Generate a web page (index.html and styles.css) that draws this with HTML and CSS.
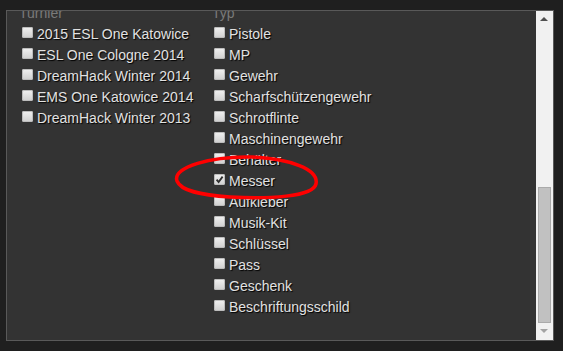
FILE: index.html
```html
<!DOCTYPE html>
<html lang="de">
<head>
    <meta charset="UTF-8">
    <meta name="viewport" content="width=device-width, initial-scale=1.0">
    <title>Filter</title>
    <link rel="stylesheet" href="styles.css">
</head>
<body>

    <div class="panel">
        <div class="filters">
            <div class="group">
                <div class="legend">Turnier</div>
                <label class="option"><span class="box"></span>2015 ESL One Katowice</label>
                <label class="option"><span class="box"></span>ESL One Cologne 2014</label>
                <label class="option"><span class="box"></span>DreamHack Winter 2014</label>
                <label class="option"><span class="box"></span>EMS One Katowice 2014</label>
                <label class="option"><span class="box"></span>DreamHack Winter 2013</label>
            </div>
            <div class="group">
                <div class="legend">Typ</div>
                <label class="option"><span class="box"></span>Pistole</label>
                <label class="option"><span class="box"></span>MP</label>
                <label class="option"><span class="box"></span>Gewehr</label>
                <label class="option"><span class="box"></span>Scharfschützengewehr</label>
                <label class="option"><span class="box"></span>Schrotflinte</label>
                <label class="option"><span class="box"></span>Maschinengewehr</label>
                <label class="option"><span class="box"></span>Behälter</label>
                <label class="option"><span class="box checked"><svg width="11" height="11" viewBox="0 0 11 11"><path d="M2.6 5.6 L4.6 8 L8.6 2.6" fill="none" stroke="#2e2e2e" stroke-width="1.8"/></svg></span>Messer</label>
                <label class="option"><span class="box"></span>Aufkleber</label>
                <label class="option"><span class="box"></span>Musik-Kit</label>
                <label class="option"><span class="box"></span>Schlüssel</label>
                <label class="option"><span class="box"></span>Pass</label>
                <label class="option"><span class="box"></span>Geschenk</label>
                <label class="option"><span class="box"></span>Beschriftungsschild</label>
            </div>
        </div>

        <div class="scrollbar">
            <div class="arrow up"></div>
            <div class="track">
                <div class="thumb"></div>
            </div>
            <div class="arrow down"></div>
        </div>

        <!-- hand drawn marker around "Messer" -->
        <svg class="marker" width="563" height="351" viewBox="0 0 563 351">
            <path d="M177 181 C172 167, 212 156, 252 157 C290 159, 319 169, 316 184 C313 197, 268 199, 230 197 C200 195, 181 191, 177 181" fill="none" stroke="#ff0000" stroke-width="3.5" stroke-linecap="round"/>
        </svg>
    </div>

</body>
</html>
```

FILE: styles.css
```css
body {
    font-family: "Liberation Sans", Arial, sans-serif;
    background-color: #1f1f1f;
    margin: 0;
    padding: 0;
}
.panel {
    display: flex;
    height: 329px;
    margin: 10px 9px 0 6px;
    background-color: #333333;
    border: 1px solid #595959;
    overflow: hidden;
}
.filters {
    flex: 1;
    display: flex;
    margin-top: -9px;
    padding-left: 12px;
}
.group {
    width: 193px;
}
.legend {
    font-size: 14px;
    line-height: 22px;
    color: #7a7a7a;
}
.option {
    display: flex;
    align-items: flex-start;
    height: 21px;
    font-size: 14px;
    line-height: 21px;
    color: #e2e2e2;
    text-shadow: 1px 1px 1px #000;
    white-space: nowrap;
}
.box {
    display: block;
    width: 11px;
    height: 11px;
    margin: 3px 4px 0 3px;
    border-radius: 2px;
    background: linear-gradient(#f2f2f2, #cfcfcf);
    box-shadow: inset 0 0 0 1px #bdbdbd;
}
.group + .group .box {
    margin-left: 2px;
}
.box svg {
    display: block;
}
.scrollbar {
    width: 17px;
    display: flex;
    flex-direction: column;
    background-color: #f1f1f1;
}
.arrow {
    height: 17px;
    position: relative;
}
.arrow::after {
    content: "";
    position: absolute;
    left: 4px;
    border-left: 4px solid transparent;
    border-right: 4px solid transparent;
}
.up::after {
    top: 6px;
    border-bottom: 4px solid #505050;
}
.down::after {
    top: 6px;
    border-top: 4px solid #a3a3a3;
}
.track {
    flex: 1;
    display: flex;
    flex-direction: column;
    justify-content: flex-end;
    padding: 0 2px;
}
.thumb {
    height: 134px;
    background-color: #c1c1c1;
    border: 1px solid #aaaaaa;
}
.marker {
    position: absolute;
    left: 0;
    top: 0;
    pointer-events: none;
}
```
